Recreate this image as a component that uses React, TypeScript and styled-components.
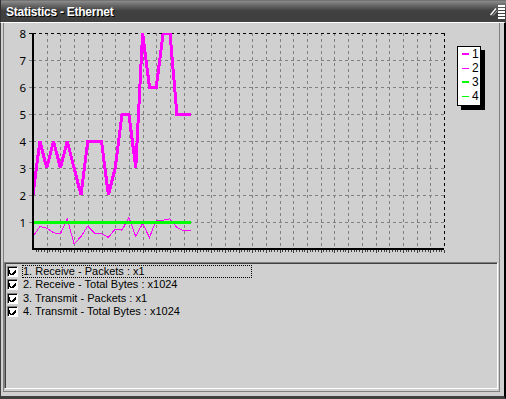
import React from "react";
import styled, { createGlobalStyle } from "styled-components";

const GlobalStyle = createGlobalStyle`
  html, body { margin: 0; padding: 0; background: #d0d0d0; }
  body { font-family: "Liberation Sans", Arial, sans-serif; }
  * { box-sizing: border-box; }
`;

const Window = styled.div`
  width: 506px;
  height: 399px;
  display: flex;
  flex-direction: column;
  background: #d0d0d0;
  overflow: hidden;
`;

const TitleBar = styled.div`
  height: 22px;
  flex: none;
  display: flex;
  align-items: flex-start;
  justify-content: space-between;
  background: linear-gradient(#5a5a5a 0px, #8c8c8c 1px, #6a6a6a 5px, #404040 11px, #404040 22px);
  border-left: 1px solid #303030;
  padding-left: 5px;
`;

const Title = styled.span`
  font-family: "Liberation Sans", Arial, sans-serif;
  font-weight: bold;
  font-size: 12px;
  letter-spacing: -0.25px;
  line-height: 14px;
  padding-top: 5px;
  color: #ffffff;
  text-shadow: 1px 1px 0 #000000;
`;

const TitleIcon = styled.svg`
  width: 16px;
  height: 22px;
  flex: none;
`;

const Body = styled.div`
  flex: 1;
  display: flex;
  flex-direction: column;
  border-top: 1px solid #ffffff;
  border-left: 1px solid #404040;
  border-right: 2px solid #000000;
  border-bottom: 3px solid #404040;
  padding: 0 4px 4px 2px;
`;

const Frame = styled.div`
  flex: 1;
  display: flex;
  flex-direction: column;
  border-left: 1px solid #808080;
  border-right: 1px solid #808080;
  border-bottom: 1px solid #808080;
  padding: 0 1px 2px 0;
`;

const ChartArea = styled.div`
  position: relative;
  height: 239px;
  flex: none;
`;

const ChartSvg = styled.svg`
  display: block;
  width: 494px;
  height: 239px;
`;

const Legend = styled.div`
  position: absolute;
  left: 453px;
  top: 23px;
  width: 24px;
  height: 60px;
  background: #ffffff;
  border: 1px solid #000000;
  box-shadow: 4px 4px 0 #000000;
  display: flex;
  flex-direction: column;
`;

const LegendRow = styled.div`
  height: 14px;
  display: flex;
  align-items: center;
  padding-left: 4px;
  font-family: "Liberation Sans", Arial, sans-serif;
  font-size: 12px;
  line-height: 13px;
  color: #000000;
`;

const Swatch = styled.span<{ $color: string; $thick: boolean }>`
  width: 7px;
  height: ${(p) => (p.$thick ? 2 : 1)}px;
  background: ${(p) => p.$color};
  margin-right: 3px;
`;

const ListPanel = styled.div`
  flex: 1;
  border: 1px solid;
  border-color: #808080 #ffffff #ffffff #808080;
  box-shadow: inset 1px 1px 0 #404040;
  padding: 2px 0 0 2px;
  display: flex;
  flex-direction: column;
`;

const Row = styled.div`
  height: 13.33px;
  display: flex;
  align-items: center;
`;

const Check = styled.span`
  width: 11px;
  height: 11px;
  flex: none;
  background: #ffffff;
  border: 1px solid;
  border-color: #808080 #ffffff #ffffff #808080;
  box-shadow: inset 1px 1px 0 #000000;
  display: flex;
  align-items: center;
  justify-content: center;
`;

const Label = styled.span<{ $focused: boolean }>`
  width: 230px;
  height: 13px;
  margin-left: 4px;
  border: 1px dotted ${(p) => (p.$focused ? "#000000" : "transparent")};
  font-family: "Liberation Sans", Arial, sans-serif;
  font-size: 11px;
  line-height: 11px;
  color: #000000;
  white-space: nowrap;
`;

const X0 = 33;
const X1 = 444;
const Y_TOP = 33;
const Y_AXIS = 249;
const STEP_Y = 27;
const COLS = 30;
const COL_W = (X1 - X0) / COLS;
const PT_W = COL_W / 2;

const s1 = [2, 4, 3, 4, 3, 4, 3, 2, 4, 4, 4, 2, 3, 5, 5, 3, 8, 6, 6, 8, 8, 5, 5, 5];
const s2 = [0.46, 0.83, 0.77, 0.6, 0.56, 1.11, 0.19, 0.46, 0.85, 0.58, 0.56, 0.43, 0.74, 0.7, 1.17, 0.46, 0.95, 0.43, 1.07, 1.07, 1.12, 0.79, 0.68, 0.68];
const s3 = s1.map(() => 1);
const s4 = s1.map(() => 0);

const yOf = (v: number) => Y_AXIS - v * STEP_Y;
const pts = (arr: number[]) => arr.map((v, i) => `${(X0 + i * PT_W).toFixed(2)},${yOf(v).toFixed(2)}`).join(" ");

const items = [
  "1. Receive - Packets : x1",
  "2. Receive - Total Bytes : x1024",
  "3. Transmit - Packets : x1",
  "4. Transmit - Total Bytes : x1024",
];

const legend = [
  { n: "1", color: "#ff00ff", thick: true },
  { n: "2", color: "#ff00ff", thick: false },
  { n: "3", color: "#00ff00", thick: true },
  { n: "4", color: "#00ff00", thick: false },
];

function Chart() {
  const hLines = [1, 2, 3, 4, 5, 6, 7];
  const vLines = Array.from({ length: COLS - 1 }, (_, j) => X0 + (j + 1) * COL_W);
  const ticks = Array.from({ length: COLS * 5 }, (_, k) => k + 1);
  return (
    <ChartSvg viewBox="4 23 494 239" shapeRendering="crispEdges">
      <defs>
        <clipPath id="plot">
          <rect x={X0} y={Y_TOP} width={X1 - X0} height={Y_AXIS - Y_TOP} />
        </clipPath>
      </defs>
      {hLines.map((k) => (
        <line key={"h" + k} x1={X0} x2={X1} y1={yOf(k) + 0.5} y2={yOf(k) + 0.5} stroke="#808080" strokeDasharray="3 3" />
      ))}
      {vLines.map((x, j) => (
        <line key={"v" + j} x1={Math.round(x) + 0.5} x2={Math.round(x) + 0.5} y1={Y_TOP} y2={Y_AXIS} stroke="#808080" strokeDasharray="3 3" />
      ))}
      <line x1={X0} x2={X1} y1={Y_TOP + 0.5} y2={Y_TOP + 0.5} stroke="#000" strokeDasharray="3 3" />
      <line x1={X1 + 0.5} x2={X1 + 0.5} y1={Y_TOP} y2={Y_AXIS} stroke="#000" strokeDasharray="3 3" />
      {[1, 2, 3, 4, 5, 6, 7, 8].map((k) => (
        <g key={"l" + k}>
          <line x1={29} x2={33} y1={yOf(k) + 0.5} y2={yOf(k) + 0.5} stroke={k === 8 ? "#000" : "#808080"} />
          <text x={26} y={yOf(k) + 4.5} textAnchor="end" fontSize={11.5} fontFamily="Noto Sans, Liberation Sans, sans-serif" fill="#000">
            {k}
          </text>
        </g>
      ))}
      <g clipPath="url(#plot)">
        <polyline points={pts(s4)} fill="none" stroke="#00ff00" strokeWidth={1} />
        <polyline points={pts(s2)} fill="none" stroke="#ff00ff" strokeWidth={1} />
        <polyline points={pts(s3)} fill="none" stroke="#00ff00" strokeWidth={3} />
        <polyline points={pts(s1)} fill="none" stroke="#ff00ff" strokeWidth={3} />
      </g>
      <rect x={X0 - 1} y={Y_TOP} width={2} height={Y_AXIS - Y_TOP + 1} fill="#000" />
      <rect x={X0 - 1} y={Y_AXIS - 1} width={X1 - X0 + 1} height={2} fill="#000" />
      {ticks.map((k) => {
        const x = Math.round(X0 + (k * COL_W) / 5) + 0.5;
        const major = k % 5 === 0;
        return <line key={"t" + k} x1={x} x2={x} y1={Y_AXIS + 1} y2={Y_AXIS + (major ? 4 : 3)} stroke="#404040" />;
      })}
    </ChartSvg>
  );
}

export default function App() {
  return (
    <Window>
      <GlobalStyle />
      <TitleBar>
        <Title>Statistics - Ethernet</Title>
        <TitleIcon viewBox="0 0 16 22" shapeRendering="crispEdges">
          <line x1={0.5} y1={15} x2={6} y2={8.5} stroke="#ffffff" strokeWidth={1.3} shapeRendering="auto" />
          <line x1={3} y1={15.5} x2={7.5} y2={10.5} stroke="#b0b0b0" strokeWidth={1} shapeRendering="auto" />
          {[5, 8, 11, 14, 17].map((y) => (
            <rect key={y} x={8} y={y} width={7} height={2} fill="#ffffff" />
          ))}
        </TitleIcon>
      </TitleBar>
      <Body>
        <Frame>
          <ChartArea>
            <Chart />
            <Legend>
              {legend.map((l) => (
                <LegendRow key={l.n}>
                  <Swatch $color={l.color} $thick={l.thick} />
                  {l.n}
                </LegendRow>
              ))}
            </Legend>
          </ChartArea>
          <ListPanel>
            {items.map((t, i) => (
              <Row key={t}>
                <Check>
                  <svg width="7" height="7" viewBox="0 0 7 7" shapeRendering="crispEdges">
                    <path d="M0 2h1v3h1v1h1v-1h1v-1h1v-1h1v-1h1v3h-1v1h-1v1h-1v1h-2v-1h-1v-1h-1z" fill="#000" />
                  </svg>
                </Check>
                <Label $focused={i === 0}>{t}</Label>
              </Row>
            ))}
          </ListPanel>
        </Frame>
      </Body>
    </Window>
  );
}
